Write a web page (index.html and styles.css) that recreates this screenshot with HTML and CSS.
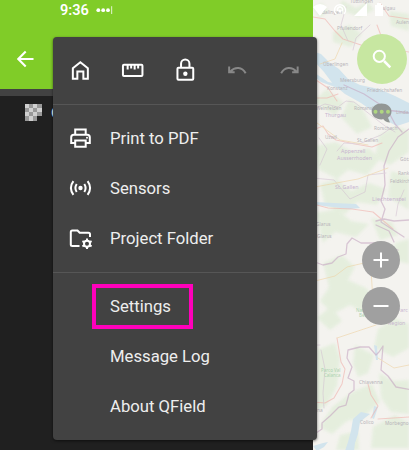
FILE: index.html
```
<!DOCTYPE html>
<html lang="en">
<head>
<meta charset="utf-8">
<title>QField</title>
<link rel="stylesheet" href="styles.css">
</head>
<body>
<div class="app">
  <aside class="drawer">
    <header class="drawer-header">
      <div class="clock"><span>9:36</span>
        <svg width="18" height="10" viewBox="0 0 18 10"><g fill="#fff"><circle cx="2.3" cy="5.2" r="1.9"/><circle cx="7.2" cy="5.2" r="1.9"/><circle cx="12" cy="5.2" r="1.9"/><rect x="15" y="1.2" width="1.2" height="7.8" opacity=".65"/></g></svg>
      </div>
      <svg class="back" width="18" height="18" viewBox="0 0 18 18" fill="none" stroke="#fff" stroke-width="2.1"><path d="M16.500 9H1.500M8.700 1.500 1.300 9l7.400 7.500"/></svg>
    </header>
    <div class="strip"></div>
    <div class="layers">
      <svg width="18" height="18" viewBox="0 0 18 18"><path fill="#d0d0d0" d="M0 0h17v12h-5v5H0z"/><path fill="#999" d="M4 0h4v4H4zM12 0h5v4h-5zM0 4h4v4H0zM8 4h4v4H8zM4 8h4v4H4zM12 8h5v4h-5zM0 12h4v5H0zM8 12h4v5H8z"/></svg>
      <span>OpenStreetMap</span>
    </div>
  </aside>

  <main class="map">
    <svg class="tiles" width="96" height="450" viewBox="313 0 96 450">
      <rect x="313" width="96" height="450" fill="#f4f3ef"/>
      <g fill="#e0edd8" opacity=".75" class="forest">
        <path d="M313 8l9-5 6 8-8 7zM342 0l14 8 12-6 6 8-15 7-20-8zM389 11l20 3v17l-18-5zM333 32l17-7 12 9-11 13-18-5zM313 101l14-12 17 14-9 13zM349 99l12 7 11 21-15 7-16-17zM315 146l21-4 17 10 16-4 11 11-13 16-19-5-11 9-19-10zM379 135l17-9 13 5v21l-19 13-15-7zM320 184l17-5 14 12 18-8 17 6-9 16-20-3-12 12-20-9zM391 171l18 5v34l-21-13zM316 213l21-4 14 12 18 3-13 13-21-5-12 11zM371 218l21 4 6 13-18 5zM323 263l19-8 13 12-7 13 18 8 16 19-10 10-22-12-17 9-13-13 9-14zM395 243l14-4v25l-16-4zM317 318l14-12 11 15-12 9zM378 329l17-11 14 6v24l-16 9-19-10zM317 350l18-7 5 15-3 28-10 19-10 6V366zM355 345l19 10-6 18-10 4-5-13zM379 373l15 8 15-1v34l-18-2-10-14zM352 392l20-8 8 18-16 15-17 4-15 13-13-7 13-20zM373 427l22-12 14 8v25h-38zM340 435l18-4 1 19h-23z"/>
      </g>
      <g fill="#d2e4ed">
        <path d="M315 52l6 2 9 9 9 6 9 10 12 6 19 4 16 7 14 7v19l-12 4-8-4-14-9-14-10-16-9-12-10-9-12-9-10z"/>
        <path d="M315 73l13 9 11 2 6 5-10-2-14-5-6-5zM315 202l19 1 22 1 4 4-10 1-17-2-18-2z"/>
        <path d="M370 414l-4 3-6 5-2 12-3 9-1 8h-9l3-9 3-11 2-12 8-7zM313 446l10-3 5-1-4 5-7 4zM374 345l3 1 1 14h-2zM374 406l4 1-2 6-2 6-2-1z"/>
      </g>
      <g fill="none" stroke-linecap="round" stroke-linejoin="round" opacity=".6">
        <path stroke="#f0b2ad" stroke-width="1.100" d="M313 17l12 2 10 12 8 8 18 6 48 7M313 78l15 10 9 13M313 98l14 0 11-4M313 130l10-4 5 8 8 6 19 4 17 3 10-4M313 204l15 4 24 1 21 3 20 17M337 338l4 24 4 7-3 15-8 14-9 5-12-1M377 25l6 16-4 24M380 3l9 13 20 3M368 384l3 11 7 11-7 12M378 419l31-2"/>
        <path stroke="#c6a7c2" stroke-width="1.300" d="M315 262l8 3 9-2 6-6 8-3 1-10 5-6 9 5 14 0 23 7M316 433l6-4v-6l8-7 9-9 7-2 3-11 5-4v-9l-6-3 4-11-5-9 1-8 12-3 9 0 7 8 3-3 4-6-2 24 7 6 8 11 17 3M409 129l-11 8-9 14-5 15 1 19-4 16 4 8-4 13 23 15M376 221l8-2 10 2 15-1M344 85l20 9 23 15 8 15 7 8M376 225l13 6 5 11M387 110l22 3"/>
        <path stroke="#d0bdcf" stroke-width=".9" d="M313 109l12-5 13 3 8-6 8 1 18 14 13 10 10 6M320 165l7-16-8-11M337 151l7-8 15 1 22-9 10-7M313 178l21 2 16 19 15-7 3-17 18-2M321 350l4 19-2 24 1 15M314 345l6 0M404 190l-6 14-2 12M346 7l-5 18 7 16M370 25l-14 13-3 12"/>
        <path stroke="#edcf9d" stroke-width=".9" d="M313 120l27 20 28 5M315 187l43-8 30-11M342 43l-7 16-15 5M315 281l20-5 12-9 17-4 14 11M376 325l-18 6-21 7M371 269l2 33-7 13M378 358l16 10 15-3"/>
      </g>
      <g class="labels">
        <text x="350" y="2.500">Tuttlingen</text><text x="322" y="14">Balingen</text><text x="377" y="10">Saulgau</text><text x="337" y="30">Pfullendorf</text><text x="396" y="24">Aulen</text><text x="323" y="66">Überlingen</text><text x="340" y="82">Meersburg</text><text x="327" y="90">Konstanz</text><text x="367" y="92">Friedrichshafen</text><text x="316" y="110">Weinfelden</text><text x="354" y="110">Romanshorn</text><text x="325" y="117" class="region">Thurgau</text><text x="396" y="114">Linda</text><text x="374" y="130">Rorschach</text><text x="325" y="139">Uzwil</text><text x="357" y="142">St. Gallen</text>
        <g class="region"><text x="341" y="153">Appenzell</text><text x="337" y="160">Ausserrhoden</text><text x="335" y="189">St. Gallen</text><text x="372" y="201" class="country">Liechtenstei</text></g>
        <text x="400" y="161">Götz</text><text x="398" y="175">Rank</text><text x="390" y="183">Feldkirch</text><text x="317" y="238">Glarus</text><text x="316" y="226">Glarus</text><text x="397" y="312" class="region">Parc</text><text x="388" y="325" class="region">Region</text><text x="356" y="312" class="park">Nat.</text><text x="359" y="317" class="park">Beverin</text><text x="321" y="372" class="park">Parco Val</text><text x="324" y="377" class="park">Calanca</text><text x="359" y="384">Chiavenna</text><text x="317" y="412">na</text><text x="360" y="424">Colico</text><text x="385" y="425">Morbegno</text>
      </g>
    </svg>
    <div class="controls">
      <svg class="status" width="70" height="16" viewBox="0 0 70 16"><g fill="#fff"><path d="M0 5Q7-1 14 5L7 14z"/><path d="M41 14 54 1v13zM62 3h2V1h4v2h2v11h-8z"/></g><g fill="none" stroke="#fff" stroke-width="1.5"><path d="M23 12a5.5 5.5 0 1 1 8 0M25 9a2.5 2.5 0 1 1 4 0"/></g><circle cx="27" cy="9" r="1.5" fill="#fff"/></svg>
      <button class="search"><svg width="20" height="20" viewBox="0 0 20 20" fill="none" stroke="#fff" stroke-width="2"><circle cx="7.3" cy="7.3" r="5.6"/><path stroke-width="2.5" d="m12 12 6.3 6.3"/></svg></button>
      <svg class="chat" width="22" height="21" viewBox="0 0 22 21"><path fill="#929795" d="M10.5.5C16 .5 20.500 3.800 20.500 8.500c0 2.700-1.500 5-3.500 6.200l2 4.800c-3.200-.2-5.500-1.100-6.500-3.200C6 17.300.7 13.500.7 8.500.7 3.800 5 .5 10.500.5z"/><g fill="#afd681"><circle cx="4.500" cy="8.800" r="2"/><circle cx="10.700" cy="8.800" r="2"/><circle cx="17" cy="8.800" r="2"/></g></svg>
      <div class="zoom">
        <button><svg width="16" height="16" viewBox="0 0 16 16"><path d="M8 .5v15M.5 8h15" stroke="#fff" stroke-width="2"/></svg></button>
        <button><svg width="16" height="16" viewBox="0 0 16 16"><path d="M.5 8h15" stroke="#fff" stroke-width="2"/></svg></button>
      </div>
    </div>
  </main>

  <nav class="menu">
    <div class="toolbar">
      <svg width="24" height="24" viewBox="0 0 24 24"><path d="M4.700 20.800V10.300L12.200 4.300l7.500 6v10.500h-4.500v-7.200H9.200v7.200z"/></svg>
      <svg width="24" height="24" viewBox="0 0 24 24"><rect x="2.800" y="6.700" width="19.500" height="11.300" rx="1"/><path d="M7.500 7v4.500M11 7v3.500M14.500 7v4.500M18 7v3.500"/></svg>
      <svg width="24" height="24" viewBox="0 0 24 24"><rect x="4.300" y="9.800" width="15.800" height="12" rx="1"/><path d="M7.900 9.500V5.700a4.200 4.200 0 0 1 8.400 0v3.800"/><circle cx="12.200" cy="15.700" r="2.200" fill="#fff" stroke="none"/></svg>
      <svg class="off" width="24" height="24" viewBox="0 0 24 24"><path d="M4 8.500v5.800h5.500M5 13.800c5-5.500 12-5 15.500 1.500"/></svg>
      <svg class="off" width="24" height="24" viewBox="0 0 24 24"><path d="M20.500 8.500v5.800H15M19.500 13.800c-5-5.500-12-5-15.500 1.500"/></svg>
    </div>
    <ul class="group">
      <li><svg width="24" height="24" viewBox="0 0 24 24"><path d="M6.200 7.700V3.600h10.500v4.100M5.500 17H2.200v-5.800q0-2.500 2.500-2.500h13.600q2.500 0 2.500 2.500V17h-3.300M6.200 14.500h10.500v6.200H6.200z"/><circle cx="18" cy="11.700" r="1" fill="#fff" stroke="none"/></svg><span>Print to PDF</span></li>
      <li><svg width="24" height="24" viewBox="0 0 24 24"><circle cx="11.500" cy="12" r="2.200" fill="#fff" stroke="none"/><path d="M7.700 8q-2.600 4 0 8M15.300 8q2.600 4 0 8M4.400 5.200q-5 6.800 0 13.600M18.600 5.200q5 6.800 0 13.600"/></svg><span>Sensors</span></li>
      <li><svg width="24" height="24" viewBox="0 0 24 24"><path d="M10.500 20H3.300q-1.500 0-1.500-1.500V6Q1.800 4.500 3.300 4.500h5.200l2.200 2.300h8.800q1.500 0 1.500 1.500V11"/><circle cx="18" cy="17.800" r="3"/><path d="M18 12.500v2M18 21.100v2M13.400 15.200l1.800 1M20.800 19.400l1.800 1M13.400 20.400l1.800-1M20.800 16.200l1.800-1"/></svg><span>Project Folder</span></li>
    </ul>
    <ul class="group plain">
      <li class="marked"><span>Settings</span></li>
      <li><span>Message Log</span></li>
      <li><span>About QField</span></li>
    </ul>
  </nav>
</div>
</body>
</html>
```
FILE: styles.css
```
*, *::before { box-sizing: border-box; }
body { margin: 0; overflow: hidden; font-family: Roboto, "Liberation Sans", sans-serif; }
svg { display: block; flex: none; }
button { padding: 0; border: 0; display: grid; place-items: center; border-radius: 50%; }
.app { position: relative; display: flex; width: 409px; height: 450px; overflow: hidden; }
.drawer { width: 313px; background: #202020; }
.drawer-header { height: 89px; background: #80cc28; color: #fff; padding: 1px 0 0 17px; }
.clock { display: flex; align-items: center; gap: 7px; height: 18px; padding-left: 43px; font-size: 14.500px; font-weight: 600; }
.back { margin-top: 31px; }
.strip { height: 7px; background: #424242; }
.layers { display: flex; align-items: center; gap: 8px; height: 33px; padding-left: 25px; color: #fff; font-size: 15px; }
.map { position: relative; width: 96px; height: 450px; }
.forest { filter: blur(1.5px); }
.labels { font: 4.800px "Noto Sans", sans-serif; fill: #b8b4ba; }
.labels .region { fill: #c8b5cf; font-size: 5.300px; }
.labels .country { font-size: 6px; }
.labels .park { fill: #acd2b0; font-size: 4.500px; }
.controls { position: absolute; inset: 0; display: flex; flex-direction: column; align-items: flex-end; padding-top: 2px; }
.status { margin-right: 26px; }
.search { width: 50px; height: 50px; margin: 16px 2px 0 0; background: #c7e7a1; }
.chat { margin: 19px 16px 0 0; }
.zoom { display: grid; gap: 8px; margin: 117px 9px 0 0; }
.zoom button { width: 38px; height: 38px; background: #a0a0a0; }
.menu { position: absolute; left: 53px; top: 36.500px; width: 263.500px; height: 403px; border-radius: 4px; background: #424242; box-shadow: 0 1px 3px rgba(0,0,0,.55); color: #eee; }
.menu svg { fill: none; stroke: #fff; stroke-width: 2; }
.toolbar { display: flex; align-items: center; height: 68px; padding: 0 1px; border-bottom: 1px solid #565656; }
.toolbar svg { flex: 1; width: 0; }
.toolbar .off { stroke: #888; }
.group { list-style: none; margin: 0; padding: 8.500px 0 8.500px 16px; border-bottom: 1px solid #565656; }
.group li { display: flex; align-items: center; gap: 17px; height: 50px; font-size: 16.700px; }
.plain { border: 0; padding-left: 57px; padding-top: 9px; }
.marked::before { content: ""; position: absolute; left: 39px; top: 247.500px; width: 101px; height: 45px; border: 4px solid #ff00bb; }
```
